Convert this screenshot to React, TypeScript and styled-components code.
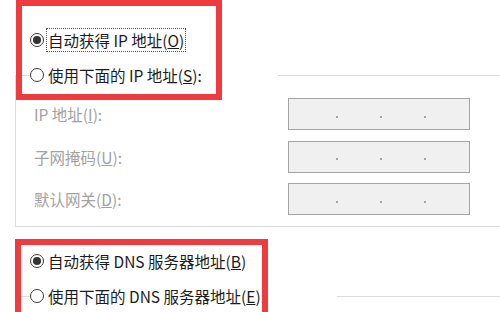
import styled, { createGlobalStyle } from 'styled-components';

const GlobalStyle = createGlobalStyle`
  html, body {
    margin: 0;
    padding: 0;
    background: #ffffff;
  }
  body {
    font-family: 'Noto Sans CJK SC', 'Noto Sans', sans-serif;
  }
`;

type AddressField = {
  before: string;
  accessKey: string;
  after: string;
};

const addressFields: AddressField[] = [
  { before: 'IP 地址(', accessKey: 'I', after: '):' },
  { before: '子网掩码(', accessKey: 'U', after: '):' },
  { before: '默认网关(', accessKey: 'D', after: '):' },
];

function IpInput() {
  return (
    <IpBox>
      <Octet $width={43} />
      <Dot />
      <Octet $width={42} />
      <Dot />
      <Octet $width={42} />
      <Dot />
      <Octet $width={42} />
    </IpBox>
  );
}

function App() {
  return (
    <Page>
      <GlobalStyle />
      {/* IP section */}
      <Section>
        <RadioRow $indent={15}>
          <RadioCircle $checked />
          <RadioText $focused>
            自动获得 IP 地址(<u>O</u>)
          </RadioText>
        </RadioRow>
        <GroupBox>
          <GroupLegend $width={248}>
            <RadioRow $indent={0}>
              <RadioCircle />
              <RadioText>
                使用下面的 IP 地址(<u>S</u>):
              </RadioText>
            </RadioRow>
          </GroupLegend>
          <FieldList>
            {addressFields.map((field) => (
              <FieldRow key={field.accessKey}>
                <FieldLabel>
                  {field.before}
                  <u>{field.accessKey}</u>
                  {field.after}
                </FieldLabel>
                <IpInput />
              </FieldRow>
            ))}
          </FieldList>
        </GroupBox>
      </Section>
      {/* DNS section */}
      <Section $gap={22}>
        <RadioRow $indent={15}>
          <RadioCircle $checked />
          <RadioText>
            自动获得 DNS 服务器地址(<u>B</u>)
          </RadioText>
        </RadioRow>
        <GroupBox>
          <GroupLegend $width={307}>
            <RadioRow $indent={0}>
              <RadioCircle />
              <RadioText>
                使用下面的 DNS 服务器地址(<u>E</u>):
              </RadioText>
            </RadioRow>
          </GroupLegend>
          <FieldList />
        </GroupBox>
      </Section>
      {/* annotation frames */}
      <RedFrame $left={16} $top={0} $width={206} $height={100} />
      <RedFrame $left={15} $top={239} $width={253} $height={90} />
    </Page>
  );
}

const Page = styled.div`
  position: relative;
  box-sizing: border-box;
  width: 500px;
  height: 312px;
  padding-top: 28px;
  overflow: hidden;
  background: #ffffff;
`;

const Section = styled.div<{ $gap?: number }>`
  display: flex;
  flex-direction: column;
  margin-top: ${({ $gap }) => $gap ?? 0}px;
  padding-left: 15px;
`;

const RadioRow = styled.div<{ $indent: number }>`
  display: flex;
  align-items: center;
  height: 24px;
  padding-left: ${({ $indent }) => $indent}px;
`;

const RadioCircle = styled.span<{ $checked?: boolean }>`
  display: grid;
  flex: none;
  place-items: center;
  box-sizing: border-box;
  width: 14px;
  height: 14px;
  border: 1px solid #3a3a3a;
  border-radius: 50%;
  background: #ffffff;

  &::after {
    content: '';
    display: ${({ $checked }) => ($checked ? 'block' : 'none')};
    width: 8px;
    height: 8px;
    border-radius: 50%;
    background: #333333;
  }
`;

const RadioText = styled.span<{ $focused?: boolean }>`
  margin-left: 2px;
  padding: 0 1px;
  color: #1c1c1c;
  font-size: 15.5px;
  line-height: 22px;
  white-space: nowrap;
  border: 1px dotted ${({ $focused }) => ($focused ? '#555555' : 'transparent')};
`;

const GroupBox = styled.fieldset`
  box-sizing: border-box;
  width: 540px;
  min-width: 0;
  margin: 11px 0 0;
  padding: 0 0 11px;
  border: 1px solid #dcdcdc;
  border-right: none;
`;

const GroupLegend = styled.legend<{ $width: number }>`
  box-sizing: border-box;
  width: ${({ $width }) => $width}px;
  margin-left: 14px;
  padding: 0;
  background: #ffffff;
`;

const FieldList = styled.div`
  display: flex;
  flex-direction: column;
  gap: 10.5px;
  padding: 11px 0 0 18px;
`;

const FieldRow = styled.div`
  display: grid;
  grid-template-columns: 254px 182px;
  align-items: center;
`;

const FieldLabel = styled.span`
  color: #a2a2a2;
  font-size: 15.5px;
  line-height: 22px;
  white-space: nowrap;
`;

const IpBox = styled.div`
  display: flex;
  align-items: center;
  box-sizing: border-box;
  height: 32px;
  padding-left: 4px;
  background: #f0f0f0;
  border: 1px solid #a4a4a4;
`;

const Octet = styled.span<{ $width: number }>`
  flex: none;
  width: ${({ $width }) => $width}px;
`;

const Dot = styled.span`
  flex: none;
  width: 2px;
  height: 2px;
  margin-top: 5px;
  background: #8a8a8a;
  border-radius: 1px;
`;

const RedFrame = styled.div<{ $left: number; $top: number; $width: number; $height: number }>`
  position: absolute;
  top: ${({ $top }) => $top}px;
  left: ${({ $left }) => $left}px;
  box-sizing: border-box;
  width: ${({ $width }) => $width}px;
  height: ${({ $height }) => $height}px;
  border: 6px solid #ef3a3e;
  pointer-events: none;
`;

export default App;
